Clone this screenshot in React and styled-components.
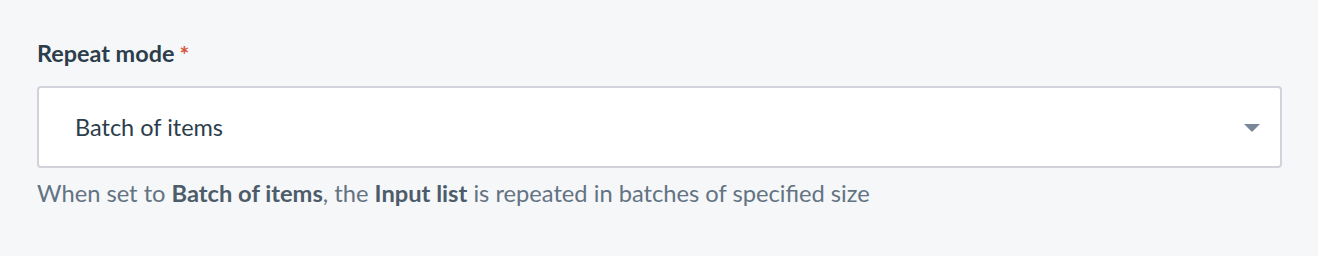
import React from "react";
import styled, { createGlobalStyle } from "styled-components";

const GlobalStyle = createGlobalStyle`
  html, body {
    margin: 0;
    padding: 0;
    background: #f6f7f9;
    font-family: Lato, "Open Sans", sans-serif;
  }
`;

const Field = styled.div`
  padding: 39px 36px 0 37px;
  display: flex;
  flex-direction: column;
`;

const Label = styled.label`
  color: #2c3e4c;
  font-size: 23.4px;
  font-weight: 700;
  line-height: 28px;
  height: 28px;
  display: flex;
  gap: 5px;
`;

const Required = styled.span`
  color: #d2543a;
  font-size: 23px;
  line-height: 26px;
  margin-top: 2px;
`;

const Select = styled.div`
  margin-top: 19px;
  height: 82px;
  box-sizing: border-box;
  background: #fff;
  border: 2px solid #d3d1da;
  border-radius: 4px;
  display: flex;
  align-items: center;
  justify-content: space-between;
  padding: 0 20px 0 36px;
`;

const Value = styled.span`
  color: #2c3e4c;
  font-size: 23.5px;
`;

const Caret = styled.span`
  width: 0;
  height: 0;
  margin-top: 1px;
  border-left: 8px solid transparent;
  border-right: 8px solid transparent;
  border-top: 8px solid #78879a;
`;

const Help = styled.p`
  margin: 11px 0 0;
  color: #637383;
  font-size: 23.7px;
  line-height: 28px;

  b {
    color: #4d5c6b;
    font-weight: 700;
  }
`;

export default function App() {
  return (
    <>
      <GlobalStyle />
      <Field>
        <Label>
          Repeat mode<Required>*</Required>
        </Label>
        <Select>
          <Value>Batch of items</Value>
          <Caret />
        </Select>
        <Help>
          When set to <b>Batch of items</b>, the <b>Input list</b> is repeated
          in batches of specified size
        </Help>
      </Field>
    </>
  );
}
